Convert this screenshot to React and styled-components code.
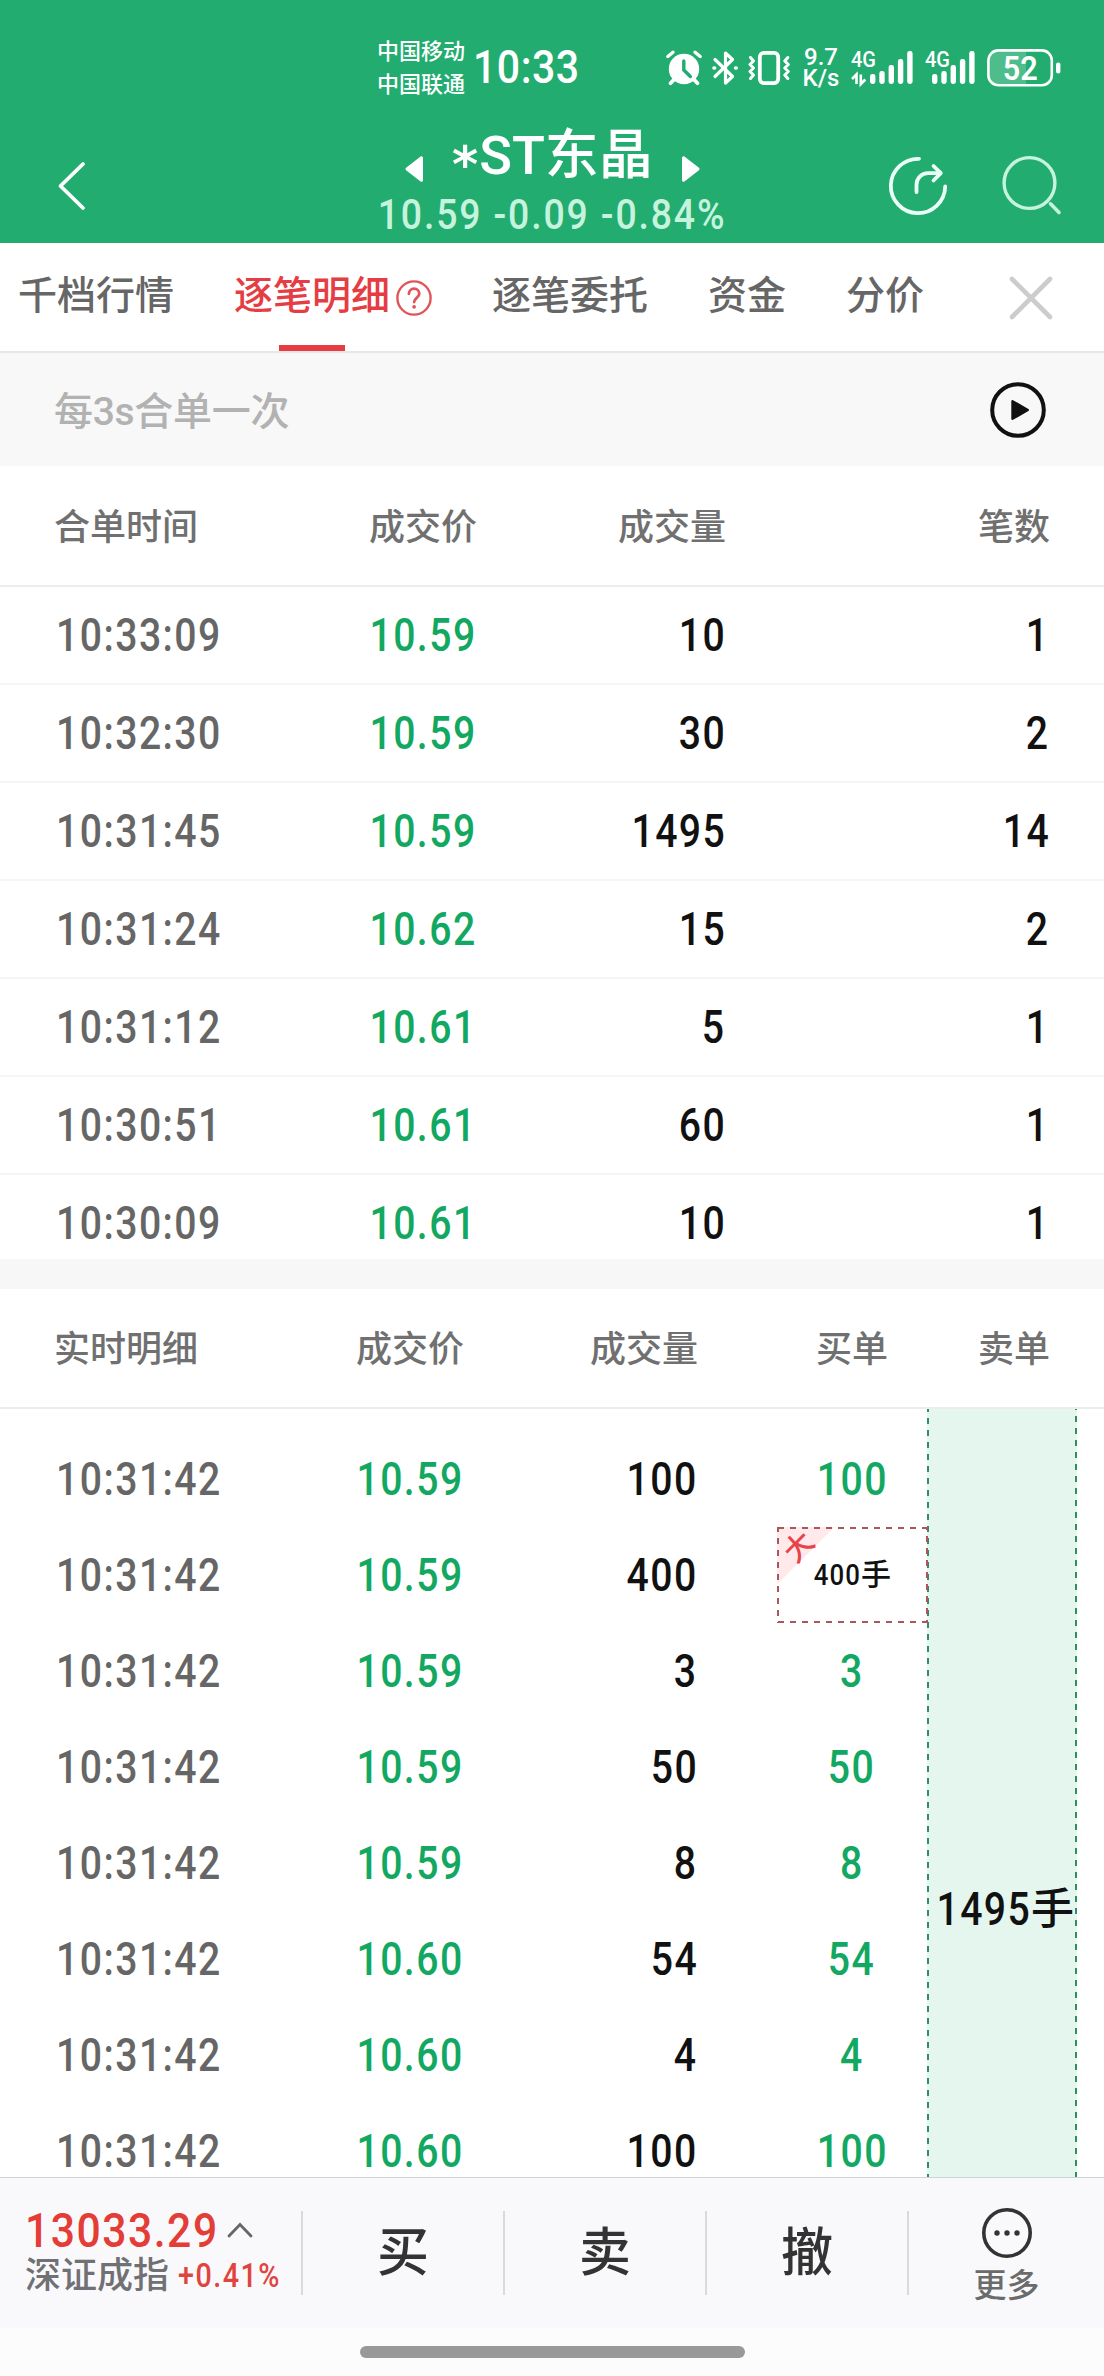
import React from 'react';
import styled, { createGlobalStyle } from 'styled-components';

const GlobalStyle = createGlobalStyle`
  * {
    box-sizing: border-box;
  }
  body {
    margin: 0;
    background: #fff;
    font-family: Roboto, 'Noto Sans CJK SC', sans-serif;
    color: #111;
  }
  svg {
    display: block;
    flex: none;
    overflow: visible;
  }
`;

const merged = [
  { time: '10:33:09', price: '10.59', volume: 10, count: 1 },
  { time: '10:32:30', price: '10.59', volume: 30, count: 2 },
  { time: '10:31:45', price: '10.59', volume: 1495, count: 14 },
  { time: '10:31:24', price: '10.62', volume: 15, count: 2 },
  { time: '10:31:12', price: '10.61', volume: 5, count: 1 },
  { time: '10:30:51', price: '10.61', volume: 60, count: 1 },
  { time: '10:30:09', price: '10.61', volume: 10, count: 1 }
];

const ticks = [
  { time: '10:31:42', price: '10.59', volume: 100 },
  { time: '10:31:42', price: '10.59', volume: 400, big: true },
  { time: '10:31:42', price: '10.59', volume: 3 },
  { time: '10:31:42', price: '10.59', volume: 50 },
  { time: '10:31:42', price: '10.59', volume: 8 },
  { time: '10:31:42', price: '10.60', volume: 54 },
  { time: '10:31:42', price: '10.60', volume: 4 },
  { time: '10:31:42', price: '10.60', volume: 100 }
];

const tabs = ['千档行情', '逐笔明细', '逐笔委托', '资金', '分价'];

// ========== Basic Components =============
const Screen = styled.div`
  width: 1104px;
  height: 2376px;
  display: flex;
  flex-direction: column;
  overflow: hidden;
`;

// Roboto squeezed a little, to get narrow DIN-like figures
const Num = styled.span`
  display: inline-block;
  font-size: ${props => props.$size || 45.5}px;
  font-weight: ${props => props.$weight || 500};
  line-height: 1;
  letter-spacing: ${props => props.$spacing || 1.7}px;
  white-space: nowrap;
  color: ${props => props.$color || '#111'};
  transform: scaleX(${props => props.$scale || 0.86});
  transform-origin: ${props => props.$origin || 'right'} center;
`;

const Header = styled.header`
  height: 243px;
  flex: none;
  background: #22ac6f;
  color: #fff;
`;

const StatusBar = styled.div`
  height: 118px;
  padding: 18px 43px 0 377px;
  display: flex;
  align-items: center;
`;

const Carriers = styled.div`
  flex: none;
  width: 96px;
  font-size: 22px;
  line-height: 33px;
  font-weight: 500;
`;

const StatusIcons = styled.div`
  margin-left: auto;
  display: flex;
  align-items: center;
  gap: 12px;
`;

const IconPair = styled.div`
  display: flex;
  gap: 10px;
`;

const Speed = styled.div`
  width: 36px;
  display: flex;
  flex-direction: column;
  align-items: center;
  font-size: 24px;
  line-height: 21px;
  font-weight: 500;
`;

const NavBar = styled.div`
  height: 125px;
  padding: 0 43px 0 56px;
  display: flex;
`;

const BackButton = styled.div`
  width: 325px;
  padding-top: 43px;
`;

const StockTitle = styled.div`
  width: 343px;
  display: flex;
  flex-direction: column;
  align-items: center;
`;

const StockName = styled.div`
  width: 298px;
  height: 74px;
  margin-bottom: 2px;
  display: flex;
  justify-content: space-between;
  align-items: flex-end;
  font-size: 54px;
  font-weight: 500;
  line-height: 73px;

  svg {
    margin-bottom: 9px;
  }
`;

const Star = styled.span`
  display: inline-block;
  margin-right: 1px;
  font-family: 'DejaVu Sans', sans-serif;
  font-weight: 700;
  font-size: 50px;
  line-height: 1;
  transform: translateY(8px);
`;

const NavActions = styled.div`
  margin-left: auto;
  padding-top: 36px;
  display: flex;
  gap: 53px;
`;

const TabBar = styled.nav`
  height: 110px;
  flex: none;
  padding: 0 51px 0 18px;
  display: flex;
  gap: 60px;
  border-bottom: 2px solid #e7e7e7;
`;

const Tab = styled.div`
  height: 108px;
  display: flex;
  flex-direction: column;
  justify-content: space-between;
  color: ${props => (props.$active ? '#e63c44' : '#666')};
  font-size: 39px;
  font-weight: 500;
  line-height: 102px;
`;

const TabLabel = styled.div`
  height: 102px;
  padding-top: 3px;
  display: flex;
  align-items: center;
  gap: 6px;

  svg {
    margin-top: 4px;
  }
`;

const Indicator = styled.div`
  width: 66px;
  height: 6px;
  margin-left: 45px;
  background: #e63c44;
`;

const CloseButton = styled.div`
  margin: 33px 0 0 auto;
`;

const MergeBar = styled.div`
  height: 113px;
  flex: none;
  padding: 0 57px 0 54px;
  display: flex;
  align-items: center;
  justify-content: space-between;
  background: #f8f8f8;
`;

const Hint = styled.div`
  padding-bottom: 4px;
  font-size: 39px;
  font-weight: 500;
  letter-spacing: -0.3px;
  color: #b2b2b2;
`;

const MergeColumns = styled.div`
  display: grid;
  grid-template-columns: 200px 223px 249px 324px;
  align-items: center;
  padding: 0 54px;
`;

const TickColumns = styled.div`
  display: grid;
  grid-template-columns: 200px 210px 234px 79px 150px 123px;
  align-items: center;
  padding-left: 54px;
`;

const MergeHead = styled(MergeColumns)`
  height: 121px;
  flex: none;
  border-bottom: 2px solid #ececec;
`;

const MergeList = styled.div`
  height: 672px;
  flex: none;
  overflow: hidden;
`;

const MergeLine = styled(MergeColumns)`
  height: 98px;
  border-bottom: 2px solid #f6f6f6;
`;

const Divider = styled.div`
  height: 30px;
  flex: none;
  background: #f7f7f7;
`;

const TickHead = styled(TickColumns)`
  height: 120px;
  flex: none;
  border-bottom: 2px solid #ececec;
`;

const TickBody = styled.div`
  height: 768px;
  flex: none;
  display: flex;
  overflow: hidden;
`;

const TickList = styled.div`
  width: 927px;
  padding-top: 22px;
`;

const TickLine = styled(TickColumns)`
  height: 96px;
  grid-template-columns: 200px 210px 234px 79px 150px;
`;

const Label = styled.div`
  padding-top: 4px;
  font-size: 36px;
  font-weight: 500;
  line-height: 50px;
  color: #707070;
  text-align: ${props => props.$align || 'right'};
`;

const Cell = styled.div`
  padding-top: 2px;
  display: flex;
  justify-content: ${props => props.$align || 'flex-end'};
`;

const TimeCell = styled(Cell)`
  padding-left: 2px;
  justify-content: flex-start;
`;

const dashRow = color => `repeating-linear-gradient(90deg, ${color} 0 6px, transparent 6px 12px)`;
const dashColumn = color => `repeating-linear-gradient(180deg, ${color} 0 6px, transparent 6px 12px)`;

const BigOrder = styled.div`
  position: relative;
  width: 151px;
  height: 96px;
  padding-right: 37px;
  display: flex;
  align-items: center;
  justify-content: flex-end;
  background:
    ${dashRow('#a9575b')} 1px 0 / 100% 2px no-repeat,
    ${dashRow('#a9575b')} 1px 100% / 100% 2px no-repeat,
    ${dashColumn('#a9575b')} 0 -1px / 2px 110% no-repeat,
    ${dashColumn('#a9575b')} 100% -3px / 2px 110% no-repeat,
    linear-gradient(135deg, #ffe9ea 41px, transparent 41px);
`;

const BigTag = styled.span`
  position: absolute;
  left: 6px;
  top: 4px;
  width: 32px;
  height: 32px;
  font-size: 29px;
  font-weight: 500;
  line-height: 32px;
  text-align: center;
  color: #e8434b;
  transform: rotate(-45deg);
`;

const Lots = styled.span`
  display: flex;
  align-items: center;
  font-size: ${props => props.$size}px;
  font-weight: 500;
  line-height: 1;
  white-space: nowrap;
`;

const SellOrder = styled.div`
  width: 150px;
  padding: 478px 3px 0 0;
  display: flex;
  justify-content: flex-end;
  align-items: flex-start;
  background:
    ${dashColumn('#2f9068')} 0 -3px / 2px 102% no-repeat,
    ${dashColumn('#2f9068')} 100% -5px / 2px 102% no-repeat,
    #e5f6ee;
`;

const Footer = styled.footer`
  height: 151px;
  flex: none;
  display: flex;
  background: #f9f9fc;
  border-top: 1px solid #cfd3d2;
`;

const IndexBox = styled.div`
  width: 301px;
  padding: 29px 0 0 25px;
`;

const IndexValue = styled.div`
  height: 48px;
  display: flex;
  align-items: center;

  svg {
    margin: -3px 0 0 -19px;
  }
`;

const IndexName = styled.div`
  height: 38px;
  padding-top: 3px;
  display: flex;
  align-items: center;
  gap: 9px;
  font-size: 36px;
  font-weight: 500;
  line-height: 38px;
  color: #707075;
  white-space: nowrap;
`;

const Action = styled.div`
  width: 202px;
  height: 84px;
  margin-top: 33px;
  border-left: 2px solid #d9dadd;
  text-align: center;
  font-size: 52px;
  font-weight: 500;
  line-height: 86px;
  color: #333;
`;

const More = styled(Action)`
  width: 197px;
  display: flex;
  flex-direction: column;
  align-items: center;
  font-size: 33px;
  line-height: 46px;
  color: #6b6b6b;

  svg {
    margin: -4px 0 4px;
  }
`;

const HomeArea = styled.div`
  height: 48px;
  flex: none;
  padding-top: 18px;
  background: #fcfcfc;
`;

const HomeBar = styled.div`
  width: 385px;
  height: 12px;
  margin: 0 auto;
  border-radius: 6px;
  background: #999;
`;

// ========== Icons ==========
function AlarmIcon() {
  return (
    <svg width='36' height='36' viewBox='0 0 36 36' fill='none' stroke='#fff' strokeLinecap='round'>
      <circle cx='18' cy='19' r='15.2' fill='#fff' stroke='none' />
      <path d='M1.8 6.5 7 2.3M34.2 6.5 29 2.3' strokeWidth='3.4' />
      <path d='M8 29.5 4.5 33.2M28 29.5l3.5 3.7' strokeWidth='3.8' />
      <path d='M17.8 11v9l6.5 6.5' stroke='#22ac6f' strokeWidth='3.4' />
    </svg>
  );
}

function BluetoothIcon() {
  return (
    <svg width='26' height='36' viewBox='0 0 26 36' fill='none' stroke='#fff' strokeWidth='3.2' strokeLinejoin='round' strokeLinecap='round'>
      <path d='M3 9.5 20.5 26.5 13.5 33V3l7 6.5L3 26.5' />
      <path d='M2 18h.6M23.6 18h.6' strokeWidth='3.6' />
    </svg>
  );
}

function VibrateIcon() {
  return (
    <svg width='43' height='36' viewBox='0 0 43 36' fill='none' stroke='#fff' strokeLinejoin='round' strokeLinecap='round'>
      <rect x='11.8' y='2.9' width='18.4' height='30.2' rx='4' strokeWidth='3.8' />
      <path d='M2.5 7.5 5.5 11 2 14.5 5.5 18 2 21.5 5.5 25 2.5 28.5M39.8 7.5 36.8 11 40.3 14.5 36.8 18 40.3 21.5 36.8 25 39.8 28.5' strokeWidth='3' />
    </svg>
  );
}

function SignalIcon({ data }) {
  const left = data ? 19 : 7;
  const tops = [24, 21, 15, 9, 1];

  return (
    <svg width={left + 43} height='36' viewBox={`0 0 ${left + 43} 36`} fill='#fff'>
      <text x='0' y='17' fontSize='22.5' fontWeight='500' textLength='25' lengthAdjust='spacingAndGlyphs'>4G</text>
      {
        tops.map((top, i) => {
          return (<rect key={i} x={left + i * 9.3} y={top} width='5.4' height={34 - top} rx='2.4' />);
        })
      }
      {data && <path d='M5.5 34V24.5L1 29M9.8 24.5V34l4.5-4.5' fill='none' stroke='#fff' strokeWidth='2.6' />}
    </svg>
  );
}

function BatteryIcon() {
  return (
    <svg width='74' height='38' viewBox='0 0 74 38'>
      <path d='M12 1.5h27v35H12A10.5 10.5 0 0 1 1.5 26V12A10.5 10.5 0 0 1 12 1.5z' fill='#fff' opacity='.2' />
      <rect x='1.4' y='1.4' width='63.4' height='34.8' rx='10' fill='none' stroke='#fff' strokeWidth='2.6' />
      <rect x='69' y='13.5' width='4.4' height='11' rx='2' fill='#fff' />
      <text x='33.3' y='30.6' fontSize='33' fontWeight='600' fill='#fff' textAnchor='middle' textLength='35' lengthAdjust='spacingAndGlyphs'>52</text>
    </svg>
  );
}

function ArrowIcon({ right }) {
  return (
    <svg width='20' height='28' viewBox='0 0 20 28' fill='#fff' stroke='#fff' strokeWidth='3' strokeLinejoin='round'>
      <path d={right ? 'M2.5 2.8v22.4L17 14z' : 'M17.5 2.8v22.4L3 14z'} />
    </svg>
  );
}

function BackIcon() {
  return (
    <svg width='32' height='50' viewBox='0 0 32 50' fill='none' stroke='#fff' strokeWidth='3.8' strokeLinecap='round' strokeLinejoin='round'>
      <path d='M27 3 4.5 25 27 47' />
    </svg>
  );
}

function ShareIcon() {
  return (
    <svg width='60' height='64' viewBox='0 0 60 64' fill='none' stroke='#eafff5' strokeWidth='3.8' strokeLinecap='round' strokeLinejoin='round'>
      <path d='M31 4.8A27.2 27.2 0 1 0 57.2 32.5' />
      <path d='M28.5 38v-7A11.5 11.5 0 0 1 40 19.2h12' />
      <path d='M45.5 12l7.3 7.2-7.3 7.3' />
    </svg>
  );
}

function SearchIcon() {
  return (
    <svg width='60' height='64' viewBox='0 0 60 64' fill='none' stroke='#c6f3de' strokeWidth='3.4' strokeLinecap='round'>
      <circle cx='28.5' cy='29' r='25.4' />
      <path d='M49.5 49.8 58 58.5' strokeWidth='3.6' />
    </svg>
  );
}

function HelpIcon() {
  return (
    <svg width='36' height='36' viewBox='0 0 36 36' fill='none' stroke='#e0545a' strokeWidth='2.4' strokeLinecap='round'>
      <circle cx='18' cy='18' r='16.6' />
      <path d='M12.9 13.8a5.2 5.2 0 0 1 10.4 0c0 4-5.2 4-5.2 8.3' strokeWidth='2.8' />
      <circle cx='18.1' cy='26.8' r='1.9' fill='#e0545a' stroke='none' />
    </svg>
  );
}

function CloseIcon() {
  return (
    <svg width='44' height='44' viewBox='0 0 44 44' stroke='#ccc' strokeWidth='4.6' strokeLinecap='round'>
      <path d='M3 3 41 41M41 3 3 41' />
    </svg>
  );
}

function PlayIcon() {
  return (
    <svg width='58' height='58' viewBox='0 0 58 58'>
      <circle cx='29' cy='29' r='25.8' fill='none' stroke='#111' strokeWidth='4' />
      <path d='M23.5 20.2v17.6L38.8 29z' fill='#111' stroke='#111' strokeWidth='2.4' strokeLinejoin='round' />
    </svg>
  );
}

function CaretIcon() {
  return (
    <svg width='28' height='18' viewBox='0 0 28 18' fill='none' stroke='#666' strokeWidth='2.8' strokeLinecap='round'>
      <path d='M3 15 14 3.5 25 15' />
    </svg>
  );
}

function MoreIcon() {
  return (
    <svg width='52' height='52' viewBox='0 0 52 52' fill='#333'>
      <circle cx='26' cy='26' r='23.2' fill='none' stroke='#333' strokeWidth='3.6' />
      <circle cx='16' cy='26' r='2.7' />
      <circle cx='26' cy='26' r='2.7' />
      <circle cx='36' cy='26' r='2.7' />
    </svg>
  );
}

// ========== Compound Components ==========
function MergeRow(props) {
  return (
    <MergeLine>
      <TimeCell><Num $origin='left' $color='#666'>{props.time}</Num></TimeCell>
      <Cell><Num $color='#12a862'>{props.price}</Num></Cell>
      <Cell><Num>{props.volume}</Num></Cell>
      <Cell><Num>{props.count}</Num></Cell>
    </MergeLine>
  );
}

function TickRow(props) {
  return (
    <TickLine>
      <TimeCell><Num $origin='left' $color='#666'>{props.time}</Num></TimeCell>
      <Cell><Num $color='#12a862'>{props.price}</Num></Cell>
      <Cell><Num>{props.volume}</Num></Cell>
      <span />
      {
        props.big
          ? (
            <BigOrder>
              <BigTag>大</BigTag>
              <Lots $size={30}>
                <Num $size={30} $spacing={1.3}>{props.volume}</Num>手
              </Lots>
            </BigOrder>
          )
          : (<Cell $align='center'><Num $origin='center' $color='#12a862'>{props.volume}</Num></Cell>)
      }
    </TickLine>
  );
}

export default function App() {
  return (
    <Screen>
      <GlobalStyle />
      <Header>
        <StatusBar>
          <Carriers>
            <div>中国移动</div>
            <div>中国联通</div>
          </Carriers>
          <Num $origin='left' $color='#fff' $scale={0.9} $spacing={0.6}>10:33</Num>
          <StatusIcons>
            <IconPair>
              <AlarmIcon />
              <BluetoothIcon />
              <VibrateIcon />
            </IconPair>
            <Speed>
              <span>9.7</span>
              <span>K/s</span>
            </Speed>
            <SignalIcon data />
            <SignalIcon />
            <BatteryIcon />
          </StatusIcons>
        </StatusBar>
        <NavBar>
          <BackButton><BackIcon /></BackButton>
          <StockTitle>
            <StockName>
              <ArrowIcon />
              <span><Star>*</Star>ST东晶</span>
              <ArrowIcon right />
            </StockName>
            <Num $size={42.5} $origin='center' $color='#c6f3de' $scale={0.88} $spacing={2.1}>10.59 -0.09 -0.84%</Num>
          </StockTitle>
          <NavActions>
            <ShareIcon />
            <SearchIcon />
          </NavActions>
        </NavBar>
      </Header>

      <TabBar>
        {
          tabs.map((title, i) => {
            return (
              <Tab key={title} $active={i === 1}>
                <TabLabel>{title}{i === 1 && <HelpIcon />}</TabLabel>
                {i === 1 && <Indicator />}
              </Tab>
            );
          })
        }
        <CloseButton><CloseIcon /></CloseButton>
      </TabBar>

      <MergeBar>
        <Hint>每3s合单一次</Hint>
        <PlayIcon />
      </MergeBar>

      <MergeHead>
        <Label $align='left'>合单时间</Label>
        <Label>成交价</Label>
        <Label>成交量</Label>
        <Label>笔数</Label>
      </MergeHead>
      <MergeList>
        {merged.map((row, i) => <MergeRow key={i} {...row} />)}
      </MergeList>

      <Divider />

      <TickHead>
        <Label $align='left'>实时明细</Label>
        <Label>成交价</Label>
        <Label>成交量</Label>
        <span />
        <Label $align='center'>买单</Label>
        <Label>卖单</Label>
      </TickHead>
      <TickBody>
        <TickList>
          {ticks.map((row, i) => <TickRow key={i} {...row} />)}
        </TickList>
        <SellOrder>
          <Lots $size={43}>
            <Num>1495</Num>手
          </Lots>
        </SellOrder>
      </TickBody>

      <Footer>
        <IndexBox>
          <IndexValue>
            <Num $size={48.5} $origin='left' $color='#e43c37' $scale={0.88}>13033.29</Num>
            <CaretIcon />
          </IndexValue>
          <IndexName>
            深证成指
            <Num $size={33} $origin='left' $color='#e0443f' $scale={0.87}>+0.41%</Num>
          </IndexName>
        </IndexBox>
        <Action>买</Action>
        <Action>卖</Action>
        <Action>撤</Action>
        <More>
          <MoreIcon />
          更多
        </More>
      </Footer>
      <HomeArea>
        <HomeBar />
      </HomeArea>
    </Screen>
  );
}
